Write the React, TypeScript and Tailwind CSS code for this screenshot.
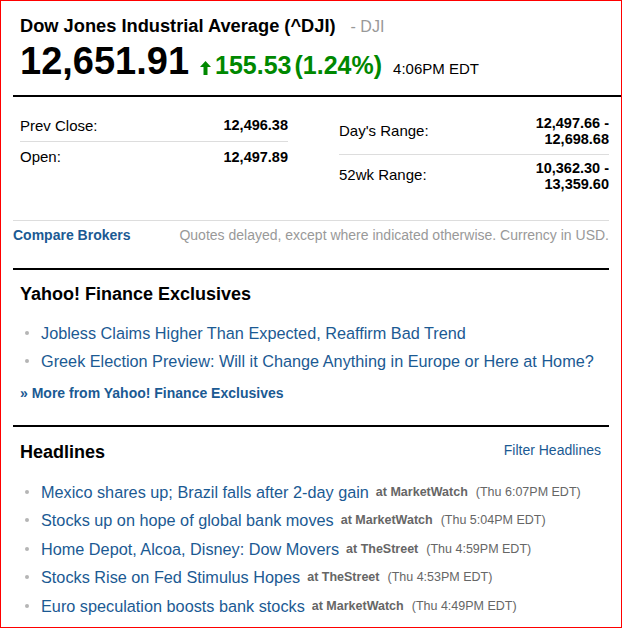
import React from 'react';

const font = { fontFamily: '"Liberation Sans", Arial, sans-serif' };

const stats = [
  { label: 'Prev Close:', value: '12,496.38' },
  { label: 'Open:', value: '12,497.89' },
];

const ranges = [
  { label: "Day's Range:", lines: ['12,497.66 -', '12,698.68'] },
  { label: '52wk Range:', lines: ['10,362.30 -', '13,359.60'] },
];

const exclusives = [
  'Jobless Claims Higher Than Expected, Reaffirm Bad Trend',
  'Greek Election Preview: Will it Change Anything in Europe or Here at Home?',
];

const headlines = [
  { title: 'Mexico shares up; Brazil falls after 2-day gain', source: 'MarketWatch', time: 'Thu 6:07PM EDT' },
  { title: 'Stocks up on hope of global bank moves', source: 'MarketWatch', time: 'Thu 5:04PM EDT' },
  { title: 'Home Depot, Alcoa, Disney: Dow Movers', source: 'TheStreet', time: 'Thu 4:59PM EDT' },
  { title: 'Stocks Rise on Fed Stimulus Hopes', source: 'TheStreet', time: 'Thu 4:53PM EDT' },
  { title: 'Euro speculation boosts bank stocks', source: 'MarketWatch', time: 'Thu 4:49PM EDT' },
];

const Bullet = () => <span className="mr-[10px] inline-block h-[4px] w-[4px] shrink-0 rounded-full bg-[#b5b5b5]" />;

export default function App() {
  return (
    <div style={font} className="h-[628px] w-[622px] overflow-hidden border border-[#ff0000] bg-white text-black">
      {/* Quote header */}
      <div className="px-[19px] pt-[14px]">
        <div className="flex items-baseline">
          <h1 className="text-[18.25px] font-bold leading-[22px]">Dow Jones Industrial Average (^DJI)</h1>
          <span className="ml-[15px] text-[16px] text-[#999]">- DJI</span>
        </div>
        <div className="mt-[2px] flex items-baseline">
          <span className="text-[38px] font-bold leading-[40px]">12,651.91</span>
          <span className="ml-[11px] flex items-baseline text-[25px] font-bold text-[#008800]">
            <svg width="11" height="14" viewBox="0 0 11 14" className="mr-[4px] self-center translate-y-[2px]">
              <path d="M5.5 0 L11 6 H7.5 V14 H3.5 V6 H0 Z" fill="#008800" />
            </svg>
            155.53<span className="ml-[3px]">(1.24%)</span>
          </span>
          <span className="ml-[11px] text-[15px]">4:06PM EDT</span>
        </div>
      </div>
      <div className="ml-[12px] mt-[10px] h-[2px] bg-black" />

      {/* Stats */}
      <div className="mx-[12px] mt-[12px] flex">
        <div className="ml-[7px] mt-[3px] w-[268px]">
          {stats.map((s, i) => (
            <div
              key={s.label}
              className={`flex items-center justify-between text-[15px] ${i === 0 ? 'h-[30px] border-b border-[#ddd]' : 'h-[32px]'}`}
            >
              <span>{s.label}</span>
              <span className="text-[14.5px] font-bold">{s.value}</span>
            </div>
          ))}
        </div>
        <div className="ml-[51px] flex-1">
          {ranges.map((r, i) => (
            <div
              key={r.label}
              className={`flex items-center justify-between text-[15px] ${i === 0 ? 'h-[46px] border-b border-[#ddd]' : 'h-[42px]'}`}
            >
              <span>{r.label}</span>
              <span className="text-right text-[14.5px] font-bold leading-[16px]">
                {r.lines.map(l => (
                  <div key={l}>{l}</div>
                ))}
              </span>
            </div>
          ))}
        </div>
      </div>

      <div className="mx-[12px] mt-[23px] flex h-[30px] items-center justify-between border-t border-[#ddd] text-[14px]">
        <a className="font-bold text-[#1b5a93]">Compare Brokers</a>
        <span className="text-[#999]">Quotes delayed, except where indicated otherwise. Currency in USD.</span>
      </div>

      {/* Exclusives */}
      <div className="mx-[12px] mt-[18px] h-[2px] bg-black" />
      <div className="px-[19px]">
        <h2 className="mt-[13px] text-[18px] font-bold leading-[22px]">Yahoo! Finance Exclusives</h2>
        <ul className="mt-[17px] space-y-[6px]">
          {exclusives.map(t => (
            <li key={t} className="flex items-center pl-[5px] text-[16.25px] leading-[22px] text-[#1b5a93]">
              <Bullet />
              <span className="ml-[2px]">{t}</span>
            </li>
          ))}
        </ul>
        <a className="mt-[11px] block text-[14px] font-bold text-[#1b5a93]">» More from Yahoo! Finance Exclusives</a>
      </div>

      {/* Headlines */}
      <div className="mx-[12px] mt-[21px] h-[2px] bg-black" />
      <div className="pl-[19px] pr-[20px]">
        <div className="mt-[14px] flex items-start justify-between">
          <h2 className="text-[18px] font-bold leading-[22px]">Headlines</h2>
          <a className="text-[14px] leading-[18px] text-[#1b5a93]">Filter Headlines</a>
        </div>
        <ul className="mt-[18px] space-y-[6.5px]">
          {headlines.map(h => (
            <li key={h.title} className="flex items-center pl-[5px] leading-[22px]">
              <Bullet />
              <span className="ml-[2px] text-[16.25px] text-[#1b5a93]">{h.title}</span>
              <span className="ml-[7px] text-[12.5px] font-bold text-[#666]">at {h.source}</span>
              <span className="ml-[8px] text-[12.5px] text-[#666]">({h.time})</span>
            </li>
          ))}
        </ul>
      </div>
    </div>
  );
}
